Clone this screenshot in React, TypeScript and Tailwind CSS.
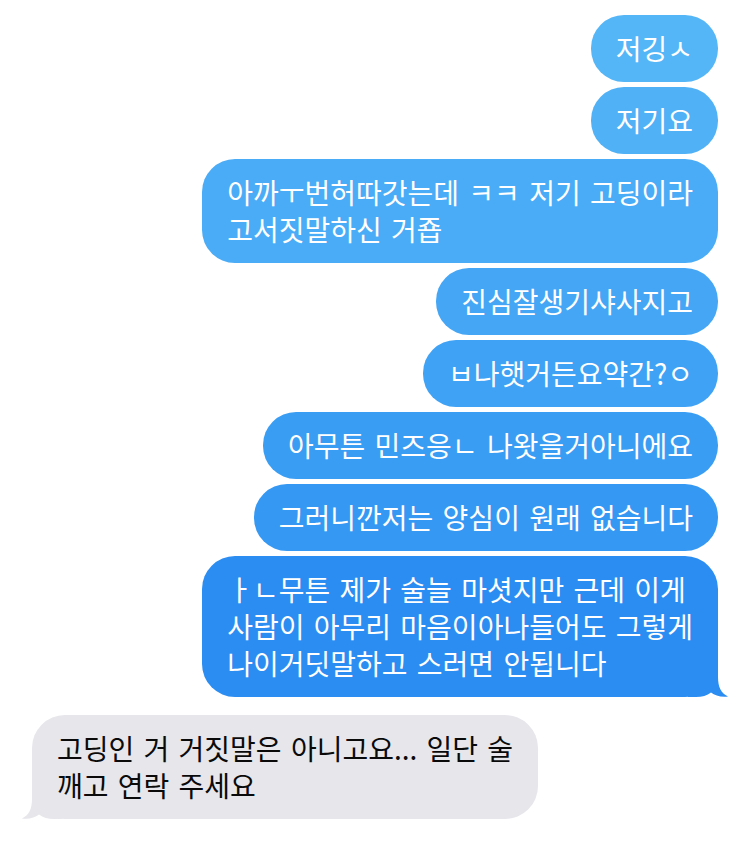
import React from "react";

type Msg = { lines: string[]; bg: string; tail?: boolean };

// outgoing bubbles get darker towards the bottom of the thread
const sent: Msg[] = [
  { lines: ["저깅ㅅ"], bg: "bg-[#55b6f7]" },
  { lines: ["저기요"], bg: "bg-[#50b1f6]" },
  { lines: ["아까ㅜ번허따갓는데 ㅋㅋ 저기 고딩이라", "고서짓말하신 거죱"], bg: "bg-[#4aacf6]" },
  { lines: ["진심잘생기샤사지고"], bg: "bg-[#44a6f5]" },
  { lines: ["ㅂ나햇거든요약간?ㅇ"], bg: "bg-[#3fa2f5]" },
  { lines: ["아무튼 민즈응ㄴ 나왓을거아니에요"], bg: "bg-[#3a9df4]" },
  { lines: ["그러니깐저는 양심이 원래 없습니다"], bg: "bg-[#3598f3]" },
  {
    lines: ["ㅏㄴ무튼 제가 술늘 마셧지만 근데 이게", "사람이 아무리 마음이아나들어도 그렇게", "나이거딧말하고 스러면 안됩니다"],
    bg: "bg-[#2b8df2]",
    tail: true,
  },
];

function SentTail() {
  return (
    <svg className="absolute -right-[11px] bottom-0" width="41" height="34" viewBox="0 0 41 34">
      <path
        d="M0 0 H30 V14 C30 24 33 30 40 33.5 C33 34.5 27 32.5 23 29.5 C19 32.5 14 34 8 34 H0 Z"
        fill="#2b8df2"
      />
    </svg>
  );
}

function ReceivedTail() {
  return (
    <svg className="absolute -left-[11px] bottom-0" width="41" height="34" viewBox="0 0 41 34">
      <path
        d="M41 0 H11 V14 C11 24 8 30 1 33.5 C8 34.5 14 32.5 18 29.5 C22 32.5 27 34 33 34 H41 Z"
        fill="#e6e6eb"
      />
    </svg>
  );
}

export default function App() {
  return (
    <div
      className="w-[750px] h-[841px] bg-white overflow-hidden px-8 pt-[15px] flex flex-col text-[28px] leading-[37px] [word-spacing:3px]"
      style={{ fontFamily: '"Noto Sans CJK KR", "Noto Sans", sans-serif' }}
    >
      <div className="flex flex-col items-end gap-[5px]">
        {sent.map((m, i) => (
          <div key={i} className={`relative ${m.bg} text-white rounded-[33px] px-[25px] py-[15px] whitespace-nowrap`}>
            {m.tail && <SentTail />}
            {m.lines.map((l, j) => (
              <div key={j} className="relative">
                {l}
              </div>
            ))}
          </div>
        ))}
      </div>

      <div className="flex mt-[18px]">
        <div className="relative bg-[#e6e6eb] text-[#0a0a0a] rounded-[33px] px-[25px] py-[15px] whitespace-nowrap">
          <ReceivedTail />
          <div className="relative">고딩인 거 거짓말은 아니고요... 일단 술</div>
          <div className="relative">깨고 연락 주세요</div>
        </div>
      </div>
    </div>
  );
}
